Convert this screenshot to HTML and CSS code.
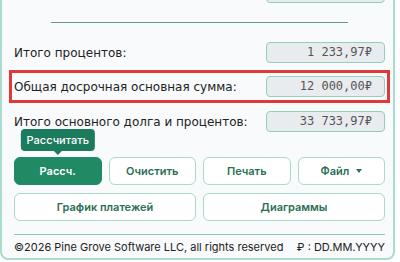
FILE: index.html
```html
<!DOCTYPE html>
<html lang="ru">
<head>
<meta charset="utf-8">
<link rel="stylesheet" href="styles.css">
</head>
<body>
<div class="panel">
  <div class="row row-hidden">
    <span class="label"></span>
    <span class="value"></span>
  </div>
  <hr class="sep">
  <div class="row">
    <span class="label">Итого процентов:</span>
    <span class="value">1 233,97₽</span>
  </div>
  <div class="row row-hl">
    <span class="label">Общая досрочная основная сумма:</span>
    <span class="value">12 000,00₽</span>
  </div>
  <div class="row row-last">
    <span class="label">Итого основного долга и процентов:</span>
    <span class="value">33 733,97₽</span>
  </div>
  <div class="btns4">
    <button class="btn btn-primary">Рассч.<span class="tip">Рассчитать</span></button>
    <button class="btn">Очистить</button>
    <button class="btn">Печать</button>
    <button class="btn">Файл <span class="caret"></span></button>
  </div>
  <div class="btns2">
    <button class="btn">График платежей</button>
    <button class="btn">Диаграммы</button>
  </div>
  <div class="footer"><span>©2026 Pine Grove Software LLC, all rights reserved</span><span class="fmt">₽ : DD.MM.YYYY</span></div>
</div>
</body>
</html>
```
FILE: styles.css
```css
html, body {
  margin: 0;
  padding: 0;
  background: #ffffff;
}
body {
  width: 400px;
  height: 262px;
  overflow: hidden;
}
.panel {
  box-sizing: border-box;
  width: 395px;
  margin-top: -20px;
  border: 2px solid #a9dccd;
  border-radius: 0 0 8px 8px;
  background: #f8fafc;
  padding: 0 8px 3px 12px;
}
.row {
  display: flex;
  align-items: center;
  justify-content: space-between;
  height: 21px;
}
.label {
  font-family: "DejaVu Sans", Verdana, sans-serif;
  font-size: 12px;
  color: #222;
  white-space: nowrap;
}
.value {
  box-sizing: border-box;
  width: 119px;
  height: 21px;
  background: #e9ecef;
  border: 1.5px solid #93cfb8;
  border-radius: 4px;
  font-family: "DejaVu Sans Mono", monospace;
  font-size: 12px;
  line-height: 18px;
  color: #555;
  text-align: right;
  padding-right: 12px;
  white-space: nowrap;
}
.row-hidden .label {
  flex: 1;
}
.sep {
  width: 80%;
  margin: 19px auto 19px;
  border: 0;
  border-top: 1px solid #5f9c8d;
  height: 0;
}
.row-hl {
  margin: 7px -5px 0;
  padding: 3px 2px;
  border: 3px solid #e0393b;
}
.row-last {
  margin-top: 8px;
}
.btns4 {
  display: grid;
  grid-template-columns: repeat(4, 1fr);
  gap: 7px;
  margin-top: 25px;
}
.btns2 {
  display: grid;
  grid-template-columns: 1fr 1fr;
  gap: 7px;
  margin-top: 8px;
}
.btn {
  position: relative;
  height: 28px;
  background: #ffffff;
  border: 1.5px solid #a9d9c7;
  border-radius: 6px;
  font-family: Inter, "Noto Sans", sans-serif;
  font-weight: 600;
  font-size: 11px;
  color: #2b6f56;
  padding: 0;
}
.btn-primary {
  background: #1f8a64;
  border-color: #1f8a64;
  color: #ffffff;
}
.caret {
  display: inline-block;
  width: 0;
  height: 0;
  margin-left: 4px;
  vertical-align: 2px;
  border-left: 3.5px solid transparent;
  border-right: 3.5px solid transparent;
  border-top: 4px solid #2b6f56;
}
.tip {
  position: absolute;
  left: 50%;
  bottom: 33px;
  transform: translateX(-50%);
  background: #1d7b5d;
  color: #fff;
  font-weight: 500;
  font-size: 11px;
  line-height: 22px;
  padding: 0 6px;
  border-radius: 4px;
  white-space: nowrap;
}
.tip::after {
  content: "";
  position: absolute;
  left: 50%;
  top: 100%;
  margin-left: -4px;
  border-left: 4px solid transparent;
  border-right: 4px solid transparent;
  border-top: 4px solid #1d7b5d;
}
.footer {
  display: flex;
  justify-content: space-between;
  margin-top: 13px;
  border-top: 1px solid #8fc6b6;
  padding-top: 4px;
  line-height: 16px;
  font-family: Inter, "Noto Sans", sans-serif;
  font-size: 11px;
  color: #222;
  white-space: nowrap;
}
```
